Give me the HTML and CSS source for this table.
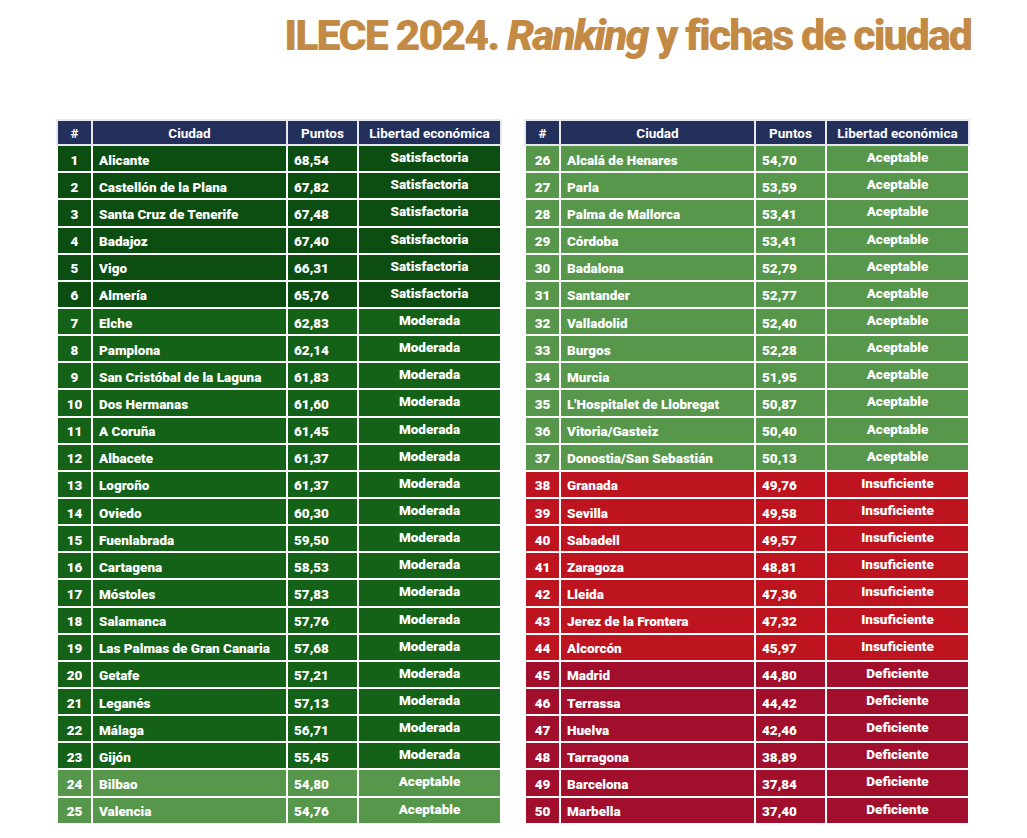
FILE: index.html
```html
<!DOCTYPE html>
<html lang="es">
<head>
<meta charset="utf-8">
<title>ILECE 2024. Ranking y fichas de ciudad</title>
<link rel="stylesheet" href="styles.css">
</head>
<body>
<div class="page">
  <h1 class="title">ILECE 2024. <em>Ranking</em> y fichas de ciudad</h1>
  <div class="tables">
    <table class="rank">
      <colgroup><col class="c-n"><col class="c-city"><col class="c-pts"><col class="c-lib"></colgroup>
      <thead><tr><th>#</th><th>Ciudad</th><th>Puntos</th><th>Libertad económica</th></tr></thead>
      <tbody>
        <tr class="sat"><td>1</td><td>Alicante</td><td>68,54</td><td>Satisfactoria</td></tr>
        <tr class="sat"><td>2</td><td>Castellón de la Plana</td><td>67,82</td><td>Satisfactoria</td></tr>
        <tr class="sat"><td>3</td><td>Santa Cruz de Tenerife</td><td>67,48</td><td>Satisfactoria</td></tr>
        <tr class="sat"><td>4</td><td>Badajoz</td><td>67,40</td><td>Satisfactoria</td></tr>
        <tr class="sat"><td>5</td><td>Vigo</td><td>66,31</td><td>Satisfactoria</td></tr>
        <tr class="sat"><td>6</td><td>Almería</td><td>65,76</td><td>Satisfactoria</td></tr>
        <tr class="mod"><td>7</td><td>Elche</td><td>62,83</td><td>Moderada</td></tr>
        <tr class="mod"><td>8</td><td>Pamplona</td><td>62,14</td><td>Moderada</td></tr>
        <tr class="mod"><td>9</td><td>San Cristóbal de la Laguna</td><td>61,83</td><td>Moderada</td></tr>
        <tr class="mod"><td>10</td><td>Dos Hermanas</td><td>61,60</td><td>Moderada</td></tr>
        <tr class="mod"><td>11</td><td>A Coruña</td><td>61,45</td><td>Moderada</td></tr>
        <tr class="mod"><td>12</td><td>Albacete</td><td>61,37</td><td>Moderada</td></tr>
        <tr class="mod"><td>13</td><td>Logroño</td><td>61,37</td><td>Moderada</td></tr>
        <tr class="mod"><td>14</td><td>Oviedo</td><td>60,30</td><td>Moderada</td></tr>
        <tr class="mod"><td>15</td><td>Fuenlabrada</td><td>59,50</td><td>Moderada</td></tr>
        <tr class="mod"><td>16</td><td>Cartagena</td><td>58,53</td><td>Moderada</td></tr>
        <tr class="mod"><td>17</td><td>Móstoles</td><td>57,83</td><td>Moderada</td></tr>
        <tr class="mod"><td>18</td><td>Salamanca</td><td>57,76</td><td>Moderada</td></tr>
        <tr class="mod"><td>19</td><td>Las Palmas de Gran Canaria</td><td>57,68</td><td>Moderada</td></tr>
        <tr class="mod"><td>20</td><td>Getafe</td><td>57,21</td><td>Moderada</td></tr>
        <tr class="mod"><td>21</td><td>Leganés</td><td>57,13</td><td>Moderada</td></tr>
        <tr class="mod"><td>22</td><td>Málaga</td><td>56,71</td><td>Moderada</td></tr>
        <tr class="mod"><td>23</td><td>Gijón</td><td>55,45</td><td>Moderada</td></tr>
        <tr class="ace"><td>24</td><td>Bilbao</td><td>54,80</td><td>Aceptable</td></tr>
        <tr class="ace"><td>25</td><td>Valencia</td><td>54,76</td><td>Aceptable</td></tr>
      </tbody>
    </table>
    <table class="rank">
      <colgroup><col class="c-n"><col class="c-city"><col class="c-pts"><col class="c-lib"></colgroup>
      <thead><tr><th>#</th><th>Ciudad</th><th>Puntos</th><th>Libertad económica</th></tr></thead>
      <tbody>
        <tr class="ace"><td>26</td><td>Alcalá de Henares</td><td>54,70</td><td>Aceptable</td></tr>
        <tr class="ace"><td>27</td><td>Parla</td><td>53,59</td><td>Aceptable</td></tr>
        <tr class="ace"><td>28</td><td>Palma de Mallorca</td><td>53,41</td><td>Aceptable</td></tr>
        <tr class="ace"><td>29</td><td>Córdoba</td><td>53,41</td><td>Aceptable</td></tr>
        <tr class="ace"><td>30</td><td>Badalona</td><td>52,79</td><td>Aceptable</td></tr>
        <tr class="ace"><td>31</td><td>Santander</td><td>52,77</td><td>Aceptable</td></tr>
        <tr class="ace"><td>32</td><td>Valladolid</td><td>52,40</td><td>Aceptable</td></tr>
        <tr class="ace"><td>33</td><td>Burgos</td><td>52,28</td><td>Aceptable</td></tr>
        <tr class="ace"><td>34</td><td>Murcia</td><td>51,95</td><td>Aceptable</td></tr>
        <tr class="ace"><td>35</td><td>L'Hospitalet de Llobregat</td><td>50,87</td><td>Aceptable</td></tr>
        <tr class="ace"><td>36</td><td>Vitoria/Gasteiz</td><td>50,40</td><td>Aceptable</td></tr>
        <tr class="ace"><td>37</td><td>Donostia/San Sebastián</td><td>50,13</td><td>Aceptable</td></tr>
        <tr class="ins"><td>38</td><td>Granada</td><td>49,76</td><td>Insuficiente</td></tr>
        <tr class="ins"><td>39</td><td>Sevilla</td><td>49,58</td><td>Insuficiente</td></tr>
        <tr class="ins"><td>40</td><td>Sabadell</td><td>49,57</td><td>Insuficiente</td></tr>
        <tr class="ins"><td>41</td><td>Zaragoza</td><td>48,81</td><td>Insuficiente</td></tr>
        <tr class="ins"><td>42</td><td>Lleida</td><td>47,36</td><td>Insuficiente</td></tr>
        <tr class="ins"><td>43</td><td>Jerez de la Frontera</td><td>47,32</td><td>Insuficiente</td></tr>
        <tr class="ins"><td>44</td><td>Alcorcón</td><td>45,97</td><td>Insuficiente</td></tr>
        <tr class="def"><td>45</td><td>Madrid</td><td>44,80</td><td>Deficiente</td></tr>
        <tr class="def"><td>46</td><td>Terrassa</td><td>44,42</td><td>Deficiente</td></tr>
        <tr class="def"><td>47</td><td>Huelva</td><td>42,46</td><td>Deficiente</td></tr>
        <tr class="def"><td>48</td><td>Tarragona</td><td>38,89</td><td>Deficiente</td></tr>
        <tr class="def"><td>49</td><td>Barcelona</td><td>37,84</td><td>Deficiente</td></tr>
        <tr class="def"><td>50</td><td>Marbella</td><td>37,40</td><td>Deficiente</td></tr>
      </tbody>
    </table>
  </div>
</div>
</body>
</html>
```

FILE: styles.css
```css
html, body {
  margin: 0;
  padding: 0;
  background: #ffffff;
}
body {
  font-family: Roboto, "Liberation Sans", Arial, sans-serif;
  color: #ffffff;
}
.page {
  width: 1027px;
  height: 838px;
  box-sizing: border-box;
  padding: 12px 0 0 56px;
}
.title {
  margin: 0 56px 0 0;
  text-align: right;
  font-family: Roboto, "Liberation Sans", sans-serif;
  font-weight: 900;
  font-size: 43px;
  line-height: 46px;
  letter-spacing: -2px;
  color: #c38a45;
  height: 46px;
}
.title em {
  font-style: italic;
}
.tables {
  display: flex;
  gap: 22px;
  margin-top: 61px;
}
.rank {
  border-collapse: collapse;
  table-layout: fixed;
  width: 444px;
  font-size: 13.5px;
  font-weight: 900;
  border: 1px solid #e3e6ea;
}
.c-n { width: 35px; }
.c-city { width: 195px; }
.c-pts { width: 71px; }
.c-lib { width: 143px; }
.rank th, .rank td {
  border: 2px solid #ffffff;
  height: 22.15px;
  padding: 0;
  white-space: nowrap;
  overflow: hidden;
}
.rank th {
  background: #23305c;
  text-align: center;
  border-color: #e6e8ee;
  padding-top: 1px;
}
.rank td:nth-child(1) { text-align: center; padding-top: 2px; }
.rank td:nth-child(2) { text-align: left; padding-left: 6px; padding-top: 2px; }
.rank td:nth-child(3) { text-align: left; padding-left: 6px; padding-top: 2px; }
.rank td:nth-child(4) { text-align: center; padding-bottom: 3px; }
.sat td { background: #0c4d11; }
.mod td { background: #146118; }
.ace td { background: #57974c; }
.ins td { background: #bd1420; }
.def td { background: #a10f2c; }
```
